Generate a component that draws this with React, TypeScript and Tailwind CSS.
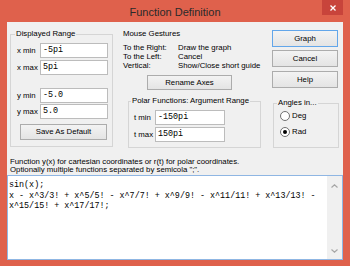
const mono = "font-['Liberation_Mono','Courier_New',monospace]";

function Field({ value, className = "" }: { value: string; className?: string }) {
  return (
    <div
      className={`flex h-[15px] items-center border border-[#bcbcbc] bg-white pl-[2px] ${mono} text-[8.4px] text-black ${className}`}
    >
      {value}
    </div>
  );
}

function Btn({
  label,
  primary,
  className = "",
}: {
  label: string;
  primary?: boolean;
  className?: string;
}) {
  return (
    <div
      className={`flex items-center justify-center border bg-linear-to-b from-[#f3f3f3] to-[#e4e4e4] text-black ${
        primary ? "border-[#62a6ea]" : "border-[#acacac]"
      } ${className}`}
    >
      {label}
    </div>
  );
}

function Radio({ label, checked }: { label: string; checked?: boolean }) {
  return (
    <div className="flex h-[12px] items-center pl-[6px]">
      <div className="grid h-[10px] w-[10px] place-items-center rounded-full border border-[#707070] bg-white">
        {checked && <div className="h-[4px] w-[4px] rounded-full bg-black" />}
      </div>
      <span className="ml-[2px]">{label}</span>
    </div>
  );
}

function Chevron({ up }: { up?: boolean }) {
  return (
    <svg width="7" height="4" viewBox="0 0 7 4" className="block">
      <path
        d={up ? "M0.5 3.5 L3.5 0.8 L6.5 3.5" : "M0.5 0.5 L3.5 3.2 L6.5 0.5"}
        fill="none"
        stroke="#a6a6a6"
        strokeWidth="1.2"
      />
    </svg>
  );
}

export default function App() {
  return (
    <div className="flex h-[266px] w-[350px] flex-col bg-[#df614c] font-['Liberation_Sans',Arial,sans-serif] text-[7.8px] text-black">
      <div className="relative flex h-[22px] items-center justify-center pt-[2px] text-[11px] text-[#2a2a2a]">
        Function Definition
        <div className="absolute right-[7px] top-0 grid h-[15px] w-[21px] place-items-center bg-[#c8443b]">
          <svg width="6" height="6" viewBox="0 0 6 6">
            <path d="M0.5 0.5 L5.5 5.5 M5.5 0.5 L0.5 5.5" stroke="#fff" strokeWidth="1.3" />
          </svg>
        </div>
      </div>

      <div className="mx-[7px] mb-[6px] flex flex-1 flex-col bg-[#f0f0f0]">
        <div className="flex h-[136px]">
          {/* Displayed Range */}
          <fieldset className="ml-[3px] mt-[7px] h-[118px] w-[103px] shrink-0 border border-[#d5d5d5]">
            <legend className="ml-[4px] px-[1px] leading-[10px]">Displayed Range</legend>
            <div className="mt-[4px] flex items-center">
              <span className="w-[29px] pl-[6px]">x min</span>
              <Field value="-5pi" className="w-[68px]" />
            </div>
            <div className="mt-[2px] flex items-center">
              <span className="w-[29px] pl-[6px]">x max</span>
              <Field value="5pi" className="w-[68px]" />
            </div>
            <div className="mt-[13px] flex items-center">
              <span className="w-[29px] pl-[6px]">y min</span>
              <Field value="-5.0" className="w-[68px]" />
            </div>
            <div className="mt-[1px] flex items-center">
              <span className="w-[29px] pl-[6px]">y max</span>
              <Field value="5.0" className="w-[68px]" />
            </div>
            <Btn label="Save As Default" className="ml-[9px] mt-[5px] h-[16px] w-[87px]" />
          </fieldset>

          {/* Mouse gestures + polar */}
          <div className="ml-[10px] flex w-[140px] shrink-0 flex-col">
            <div className="mt-[7px] leading-[9px]">Mouse Gestures</div>
            <div className="mt-[5px] grid grid-cols-[55px_1fr] leading-[9px]">
              <span>To the Right:</span>
              <span>Draw the graph</span>
              <span>To the Left:</span>
              <span>Cancel</span>
              <span>Vertical:</span>
              <span className="whitespace-nowrap">Show/Close short guide</span>
            </div>
            <Btn label="Rename Axes" className="ml-[24px] mt-[5px] h-[15px] w-[85px]" />
            <fieldset className="ml-[5px] mt-[6px] h-[52px] w-[133px] border border-[#d5d5d5]">
              <legend className="ml-[2px] px-[1px] leading-[10px]">
                Polar Functions: Argument Range
              </legend>
              <div className="mt-[4px] flex items-center">
                <span className="w-[26px] pl-[5px]">t min</span>
                <Field value="-150pi" className="w-[70px]" />
              </div>
              <div className="mt-[2px] flex items-center">
                <span className="w-[26px] pl-[5px]">t max</span>
                <Field value="150pi" className="w-[70px]" />
              </div>
            </fieldset>
          </div>

          {/* Buttons + angles */}
          <div className="ml-[9px] flex w-[67px] shrink-0 flex-col">
            <Btn label="Graph" primary className="mt-[8px] h-[17px] w-[66px]" />
            <Btn label="Cancel" className="mt-[3px] h-[17px] w-[66px]" />
            <Btn label="Help" className="mt-[4px] h-[17px] w-[66px]" />
            <fieldset className="ml-[1px] mt-[10px] h-[50px] w-[66px] border border-[#d5d5d5]">
              <legend className="ml-[3px] px-[1px] leading-[10px]">Angles in...</legend>
              <div className="mt-[2px]">
                <Radio label="Deg" />
              </div>
              <div className="mt-[4px]">
                <Radio label="Rad" checked />
              </div>
            </fieldset>
          </div>
        </div>

        <div className="pl-[3px] leading-[8px]">
          <div>Function y(x) for cartesian coordinates or r(t) for polar coordinates.</div>
          <div>Optionally multiple functions separated by semicola &quot;;&quot;.</div>
        </div>

        <div className="mt-[1px] flex flex-1 border border-[#8fb6e3] bg-white">
          <div className={`flex-1 pl-[1px] pt-[4px] ${mono} text-[8.4px] leading-[10.5px] whitespace-pre text-black`}>
            <div>sin(x);</div>
            <div>x - x^3/3! + x^5/5! - x^7/7! + x^9/9! - x^11/11! + x^13/13! -</div>
            <div>x^15/15! + x^17/17!;</div>
          </div>
          <div className="flex w-[15px] flex-col items-center justify-between bg-[#f0f0f0] pb-[6px] pt-[8px]">
            <Chevron up />
            <Chevron />
          </div>
        </div>
      </div>
    </div>
  );
}
